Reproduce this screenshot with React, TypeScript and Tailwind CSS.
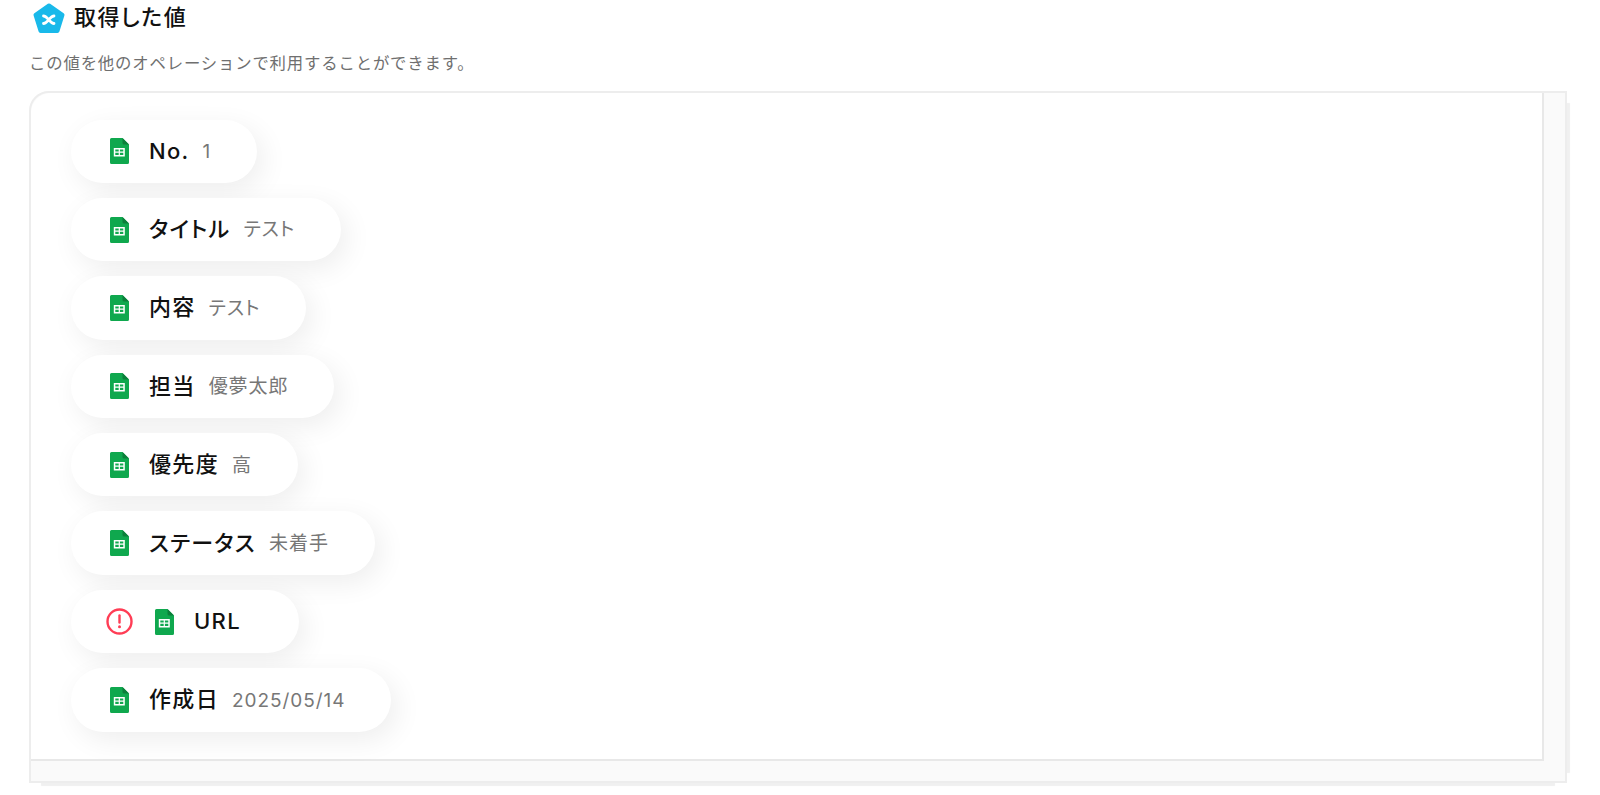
import clsx from "clsx";

const fontStack = { fontFamily: 'Inter, "Noto Sans CJK JP", sans-serif' };

const rows = [
  { label: "No.", value: "1" },
  { label: "タイトル", value: "テスト" },
  { label: "内容", value: "テスト" },
  { label: "担当", value: "優夢太郎" },
  { label: "優先度", value: "高" },
  { label: "ステータス", value: "未着手" },
  { label: "URL", value: "", warn: true },
  { label: "作成日", value: "2025/05/14" },
];

function SheetIcon() {
  return (
    <svg width="19" height="26" viewBox="0 0 19 26" className="shrink-0">
      <path d="M1.5 0H12.5L19 6.5V24.5A1.5 1.5 0 0 1 17.5 26H1.5A1.5 1.5 0 0 1 0 24.5V1.5A1.5 1.5 0 0 1 1.5 0Z" fill="#0fa84e" />
      <path d="M12.5 0L19 6.5H14A1.5 1.5 0 0 1 12.5 5Z" fill="#0b7f3a" />
      <path d="M3.8 10H14.8V18.4H3.8ZM5.3 11.5V13.6H8.7V11.5ZM9.9 11.5V13.6H13.3V11.5ZM5.3 14.8V16.9H8.7V14.8ZM9.9 14.8V16.9H13.3V14.8Z" fill="#fff" fillRule="evenodd" />
    </svg>
  );
}

function WarnIcon() {
  return (
    <svg width="27" height="27" viewBox="0 0 27 27" className="shrink-0">
      <circle cx="13.5" cy="13.5" r="12" fill="none" stroke="#ff3d55" strokeWidth="2.4" />
      <path d="M13.5 7.5V14.5" stroke="#ff3d55" strokeWidth="2.4" strokeLinecap="round" />
      <circle cx="13.5" cy="18.7" r="1.5" fill="#ff3d55" />
    </svg>
  );
}

function Logo() {
  return (
    <svg width="32" height="32" viewBox="0 0 32 32" className="mt-[2px] shrink-0">
      <path d="M16 3.5L29.5 13L24.5 29H7.5L2.5 13Z" fill="#19b9ea" stroke="#19b9ea" strokeWidth="4" strokeLinejoin="round" />
      <path d="M10.5 14C14.5 14 17 21.5 21 21.5M21 14C17 14 14.5 21.5 10.5 21.5" fill="none" stroke="#fff" strokeWidth="2.8" strokeLinecap="round" />
    </svg>
  );
}

export default function App() {
  return (
    <div className="h-[795px] w-[1600px] overflow-hidden bg-white" style={fontStack}>
      <div className="flex h-[34px] items-center gap-[9px] pl-[33px]">
        <Logo />
        <h2 className="text-[22px] font-medium tracking-[0.07em] text-[#111] [font-feature-settings:'palt']">取得した値</h2>
      </div>
      <p className="ml-[29px] mt-[16px] text-[16.4px] leading-[26px] tracking-[0.05em] text-[#6f6f6f]">
        この値を他のオペレーションで利用することができます。
      </p>
      <div className="ml-[29px] mt-[15px] h-[692px] w-[1538px] rounded-tl-[20px] border-2 border-[#ededed] bg-[#fafafa] pb-[20px] pr-[21px] shadow-[14px_1px_1px_-11px_#f0f0f0,0_15px_1px_-12px_#f0f0f0]">
        <div className="flex h-full flex-col items-start gap-[15px] rounded-tl-[20px] border-b-2 border-r-2 border-[#e8e8e8] bg-white pl-[40px] pt-[26.5px] [font-feature-settings:'palt']">
          {rows.map((row) => (
            <div
              key={row.label}
              className={clsx(
                "flex h-[63.4px] items-center rounded-full bg-white shadow-[6px_8px_28px_rgba(0,0,0,0.07)]",
                row.warn ? "pl-[35px] pr-[45px]" : "pl-[39px] pr-[46px]",
              )}
            >
              {row.warn && (
                <span className="mr-[22px] flex">
                  <WarnIcon />
                </span>
              )}
              <SheetIcon />
              <span className="ml-[20px] text-[22px] font-medium tracking-[0.06em] text-[#111]">{row.label}</span>
              <span className="ml-[13px] mt-[2px] text-[19px] tracking-[0.05em] text-[#777]">{row.value}</span>
            </div>
          ))}
        </div>
      </div>
    </div>
  );
}
